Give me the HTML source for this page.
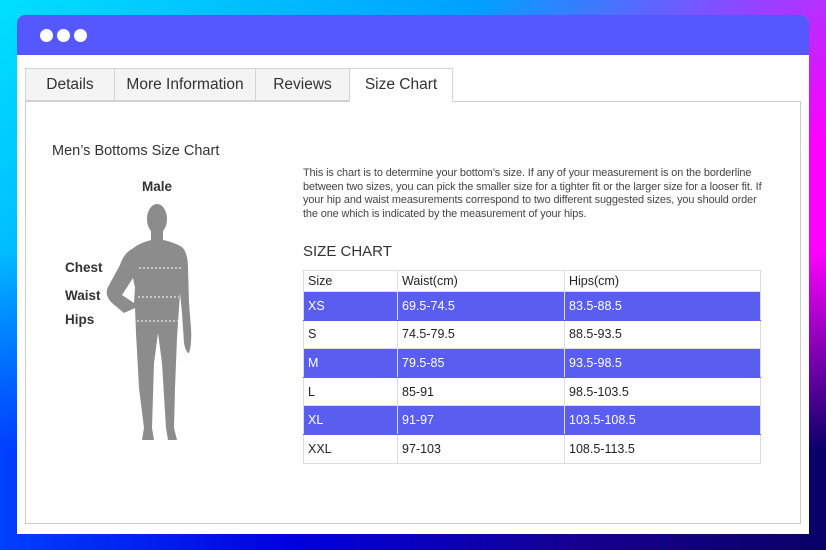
<!DOCTYPE html>
<html><head><meta charset="utf-8"><style>
*{margin:0;padding:0;box-sizing:border-box}
body{width:826px;height:550px;overflow:hidden;position:relative;font-family:"Liberation Sans",sans-serif;color:#333;
background:linear-gradient(135deg,#00e0ff 0%,#00a0ff 35%,#ff00ff 70%,#ff00ff 100%);}
.win{position:absolute;left:17px;top:15px;width:792px;height:519px;background:#fff;border-radius:8px 8px 0 0;overflow:hidden}
.hd{height:40px;background:#5558ff;position:relative}
.dot{position:absolute;top:14px;width:13px;height:13px;border-radius:50%;background:#fff}
.tab{position:absolute;top:53px;height:33px;background:#f4f4f4;border:1px solid #d4d4d4;font-size:15.5px;color:#333;text-align:center;line-height:31px}
.panel{position:absolute;left:8px;top:86px;width:776px;height:423px;border:1px solid #ccc}
table{position:absolute;left:286px;top:255px;border-collapse:collapse;font-size:12.5px;color:#222}
td{border:1px solid #ddd;height:28.6px;padding-left:4px}
tr.h td{height:21px}
tr.b td{background:#5a5ef0;color:#fff;border-color:#5a5ef0 #ddd}
</style></head><body>
<div style="position:absolute;left:0;right:0;top:250px;height:300px;background:linear-gradient(90deg,#0040ff 0%,#0000e0 35%,#140090 70%,#0a0068 100%);-webkit-mask-image:linear-gradient(180deg,transparent 0,#000 200px);mask-image:linear-gradient(180deg,transparent 0,#000 200px)"></div>
<div class="win">
<div class="hd"><div class="dot" style="left:23px"></div><div class="dot" style="left:40px"></div><div class="dot" style="left:57px"></div></div>
<div class="panel"></div>
<div class="tab" style="left:8px;width:90px">Details</div>
<div class="tab" style="left:97px;width:142px">More Information</div>
<div class="tab" style="left:238px;width:95px">Reviews</div>
<div class="tab" style="left:332px;width:104px;background:#fff;border-bottom-color:#fff;height:34px">Size Chart</div>
<div style="position:absolute;left:35px;top:128px;font-size:14.5px">Men’s Bottoms Size Chart</div>
<div style="position:absolute;left:125px;top:164px;font-size:13.5px;font-weight:bold">Male</div>
<div style="position:absolute;left:48px;top:245px;font-size:13.5px;font-weight:bold">Chest</div>
<div style="position:absolute;left:48px;top:273px;font-size:13.5px;font-weight:bold">Waist</div>
<div style="position:absolute;left:48px;top:297px;font-size:13.5px;font-weight:bold">Hips</div>
<svg style="position:absolute;left:85px;top:188px" width="95" height="240" viewBox="0 0 95 240">
<g fill="#8c8c8c">
<ellipse cx="55" cy="16" rx="10" ry="15"/>
<rect x="49" y="26" width="12" height="12"/>
<path d="M30 46 Q40 38 55 36 Q70 38 80 44 Q86 50 86 65 L87 100 L89 125 Q90 140 87 150 Q84 150 82 140 L80 110 L78 90 L76 120 L75 135 L73 185 L72 225 L75 237 L66 237 L64 225 L60 160 L56 130 L52 160 L50 225 L52 237 L40 237 L42 225 L37 185 L34 130 L33 105 L22 110 L10 100 Q2 92 6 84 L18 62 Q22 50 30 46 Z M31 75 L20 92 L32 100 L33 85 Z"/>
</g>
<g stroke="#fff" stroke-width="1" stroke-dasharray="2,2"><line x1="37" y1="65" x2="80" y2="65"/><line x1="36" y1="94" x2="77" y2="94"/><line x1="35" y1="118" x2="76" y2="118"/></g>
</svg>
<div style="position:absolute;left:286px;top:152px;width:466px;font-size:10.9px;line-height:13.7px;color:#444;letter-spacing:-0.1px">This is chart is to determine your bottom’s size. If any of your measurement is on the borderline between two sizes, you can pick the smaller size for a tighter fit or the larger size for a looser fit. If your hip and waist measurements correspond to two different suggested sizes, you should order the one which is indicated by the measurement of your hips.</div>
<div style="position:absolute;left:286px;top:228px;font-size:15px;color:#333">SIZE CHART</div>
<table>
<tr class="h"><td style="width:94px">Size</td><td style="width:167px">Waist(cm)</td><td style="width:196px">Hips(cm)</td></tr>
<tr class="b"><td>XS</td><td>69.5-74.5</td><td>83.5-88.5</td></tr>
<tr><td>S</td><td>74.5-79.5</td><td>88.5-93.5</td></tr>
<tr class="b"><td>M</td><td>79.5-85</td><td>93.5-98.5</td></tr>
<tr><td>L</td><td>85-91</td><td>98.5-103.5</td></tr>
<tr class="b"><td>XL</td><td>91-97</td><td>103.5-108.5</td></tr>
<tr><td>XXL</td><td>97-103</td><td>108.5-113.5</td></tr>
</table>
</div>
</body></html>
